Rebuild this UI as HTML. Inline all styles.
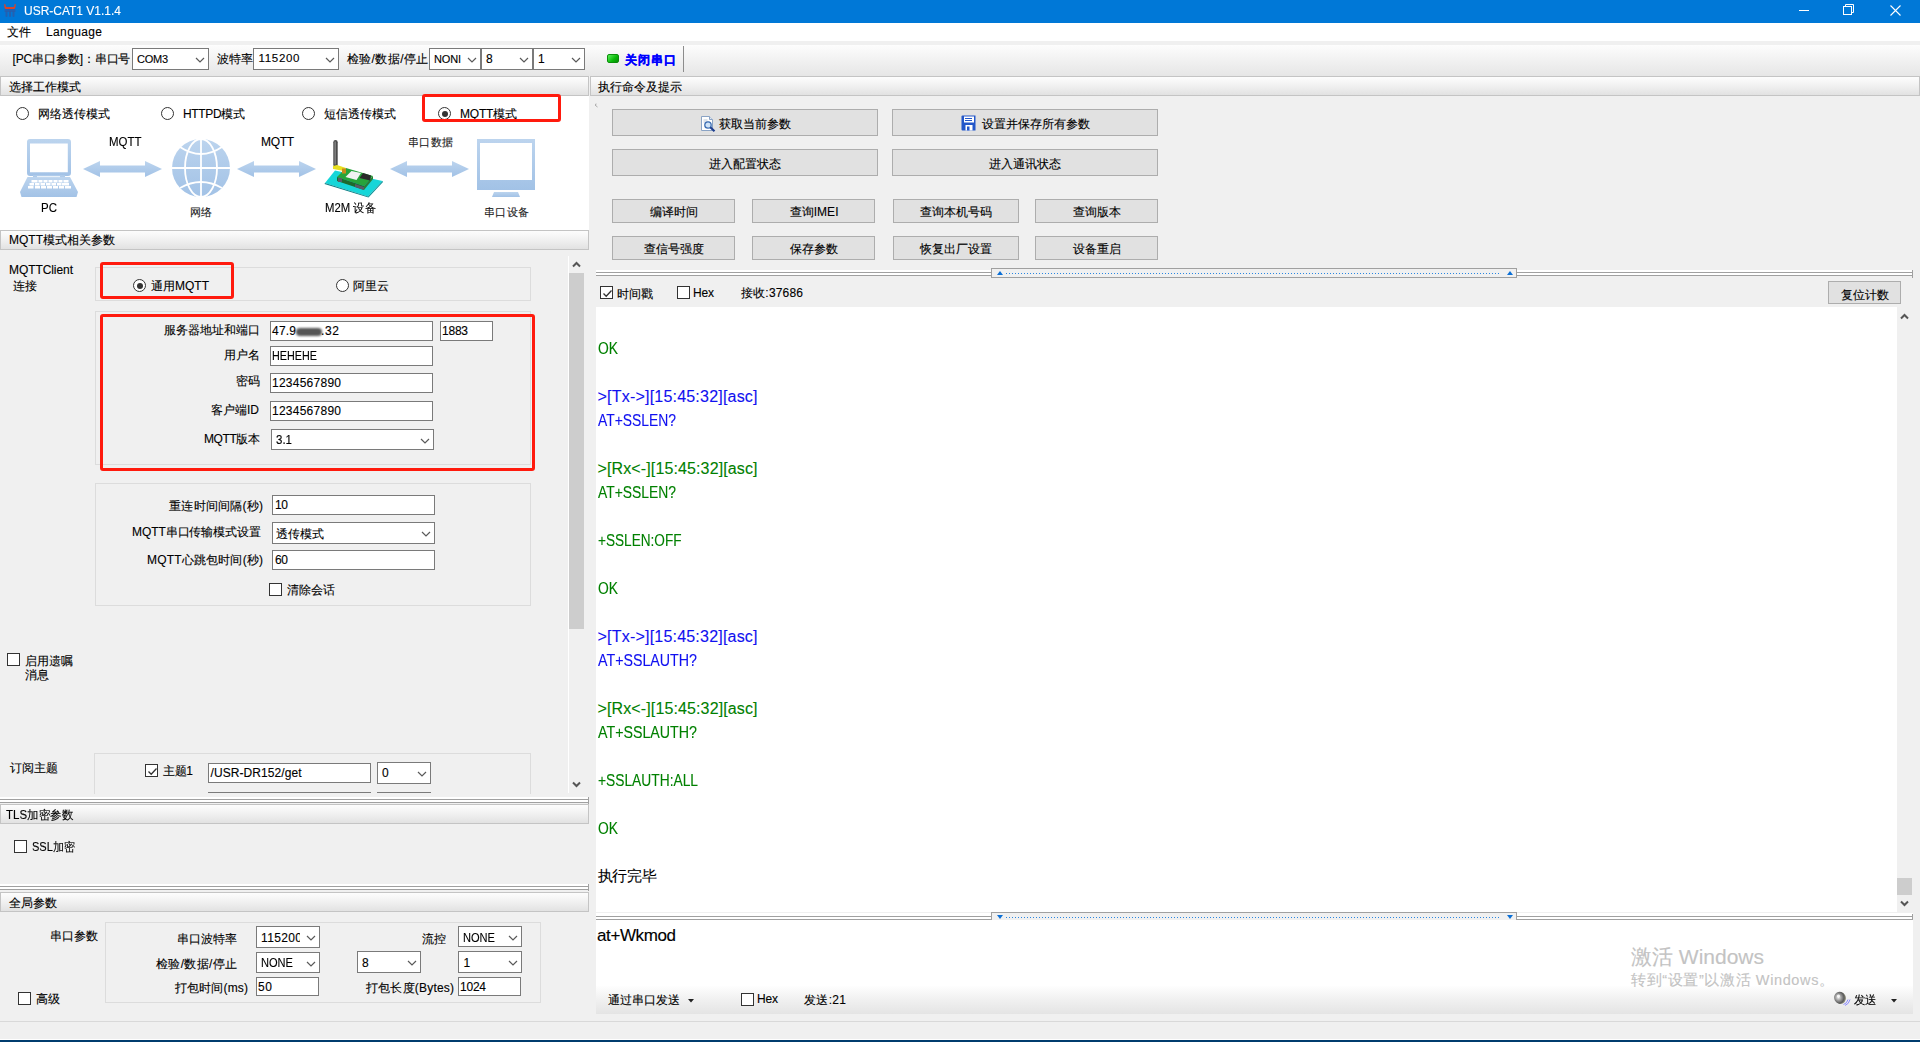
<!DOCTYPE html><html><head><meta charset="utf-8"><style>*{margin:0;padding:0;box-sizing:border-box}
html,body{width:1920px;height:1042px;overflow:hidden}
body{position:relative;background:#f0f0f0;font-family:"Liberation Sans",sans-serif;font-size:12px;color:#000}
.a{position:absolute}
.t{position:absolute;white-space:nowrap;-webkit-text-stroke:0.12px currentColor}
svg{display:block}
</style></head><body>
<div class="a" style="left:0px;top:0px;width:1920px;height:23px;background:#0078d7;"></div>
<svg class="a" style="left:4px;top:4px" width="12" height="14" viewBox="0 0 12 14"><path d="M0.2 0.3 q0.6 -0.6 1.2 0 l0.6 2.6 h8 l0.6 -2.6 q0.6 -0.6 1.2 0 l-0.4 3.2 l-1 1.6 h-9 l-1 -1.6z" fill="#d8452a"/><path d="M0.5 5 h11 v3 h-11z" fill="#2b5ba8" opacity=".75"/><rect x="1.5" y="7" width="2" height="6" rx="1" fill="#2b5ba8" opacity=".8"/><rect x="5" y="7" width="2" height="6" rx="1" fill="#2b5ba8" opacity=".8"/><rect x="8.5" y="7" width="2" height="6" rx="1" fill="#2b5ba8" opacity=".8"/></svg>
<div class="t" style="left:24px;top:4.53px;font-size:12.5px;line-height:12.5px;color:#fff;transform:scaleX(0.9585);transform-origin:0 0">USR-CAT1 V1.1.4</div>
<div class="a" style="left:1799px;top:10px;width:10px;height:1px;background:#fff;"></div>
<svg class="a" style="left:1843px;top:4px" width="12" height="12" viewBox="0 0 12 12"><rect x="0.5" y="2.5" width="8" height="8" fill="none" stroke="#fff"/><path d="M2.5 2.5 V0.5 H10.5 V8.5 H8.5" fill="none" stroke="#fff"/></svg>
<svg class="a" style="left:1890px;top:5px" width="11" height="11" viewBox="0 0 11 11"><path d="M0.5 0.5 L10.5 10.5 M10.5 0.5 L0.5 10.5" stroke="#fff" stroke-width="1.1"/></svg>
<div class="a" style="left:0px;top:23px;width:1920px;height:18px;background:#fff;"></div>
<div class="t" style="left:7px;top:25.94px;font-size:12px;line-height:12px;color:#000;">文件</div>
<div class="t" style="left:46px;top:25.94px;font-size:12px;line-height:12px;color:#000;letter-spacing:0.373px">Language</div>
<div class="a" style="left:0px;top:41px;width:1920px;height:4px;background:#f0f0f0;"></div>
<div class="a" style="left:0px;top:45px;width:1920px;height:31px;background:linear-gradient(#fdfdfd,#f1f1f1 50%,#e6e6e6);"></div>
<div class="t" style="left:12.5px;top:52.94px;font-size:12px;line-height:12px;color:#000;letter-spacing:-0.122px">[PC串口参数]：串口号</div>
<div class="a" style="left:132px;top:48px;width:77px;height:22px;background:#fff;border:1px solid #7a7a7a;"></div>
<div class="t" style="left:137px;top:53.77px;font-size:11px;line-height:11px;color:#000;letter-spacing:-0.260px">COM3</div>
<div class="a" style="left:195px;top:57.0px;width:10px;height:6px"><svg style="display:block" width="10" height="6" viewBox="0 0 10 6"><path d="M1 1 L5 5 L9 1" fill="none" stroke="#5a5a5a" stroke-width="1.2"/></svg></div>
<div class="t" style="left:216.5px;top:52.94px;font-size:12px;line-height:12px;color:#000;letter-spacing:0.000px">波特率</div>
<div class="a" style="left:253px;top:48px;width:86px;height:22px;background:#fff;border:1px solid #7a7a7a;"></div>
<div class="t" style="left:258.5px;top:53.35px;font-size:11.5px;line-height:11.5px;color:#000;letter-spacing:0.694px">115200</div>
<div class="a" style="left:325px;top:57.0px;width:10px;height:6px"><svg style="display:block" width="10" height="6" viewBox="0 0 10 6"><path d="M1 1 L5 5 L9 1" fill="none" stroke="#5a5a5a" stroke-width="1.2"/></svg></div>
<div class="t" style="left:346.5px;top:52.94px;font-size:12px;line-height:12px;color:#000;letter-spacing:0.475px">检验/数据/停止</div>
<div class="a" style="left:429px;top:48px;width:52px;height:22px;background:#fff;border:1px solid #7a7a7a;"></div>
<div class="t" style="left:434px;top:53.77px;font-size:11px;line-height:11px;color:#000;letter-spacing:-0.167px">NONI</div>
<div class="a" style="left:467px;top:57.0px;width:10px;height:6px"><svg style="display:block" width="10" height="6" viewBox="0 0 10 6"><path d="M1 1 L5 5 L9 1" fill="none" stroke="#5a5a5a" stroke-width="1.2"/></svg></div>
<div class="a" style="left:481px;top:48px;width:52px;height:22px;background:#fff;border:1px solid #7a7a7a;"></div>
<div class="t" style="left:486px;top:52.94px;font-size:12px;line-height:12px;color:#000;">8</div>
<div class="a" style="left:519px;top:57.0px;width:10px;height:6px"><svg style="display:block" width="10" height="6" viewBox="0 0 10 6"><path d="M1 1 L5 5 L9 1" fill="none" stroke="#5a5a5a" stroke-width="1.2"/></svg></div>
<div class="a" style="left:533px;top:48px;width:52px;height:22px;background:#fff;border:1px solid #7a7a7a;"></div>
<div class="t" style="left:538px;top:52.94px;font-size:12px;line-height:12px;color:#000;">1</div>
<div class="a" style="left:571px;top:57.0px;width:10px;height:6px"><svg style="display:block" width="10" height="6" viewBox="0 0 10 6"><path d="M1 1 L5 5 L9 1" fill="none" stroke="#5a5a5a" stroke-width="1.2"/></svg></div>
<div class="a" style="left:607px;top:54px;width:12px;height:9px;border-radius:2px;background:linear-gradient(135deg,#5ef05e,#08b808 60%,#0a8a0a);border:1px solid #0a8f0a;"></div>
<div class="t" style="left:624.5px;top:53.94px;font-size:12px;line-height:12px;color:#0000ff;font-weight:bold;-webkit-text-stroke:0.3px #0000ff;letter-spacing:1.000px">关闭串口</div>
<div class="a" style="left:683px;top:46px;width:1px;height:26px;background:#8c8c8c;"></div>
<div class="a" style="left:0px;top:76px;width:589px;height:20px;border:1px solid #c4c4c4;background:linear-gradient(#fdfdfd,#f3f3f3 40%,#e2e2e2);"></div>
<div class="t" style="left:9px;top:80.94px;font-size:12px;line-height:12px;color:#000;">选择工作模式</div>
<div class="a" style="left:0px;top:96px;width:589px;height:134px;background:#fff;"></div>
<div class="a" style="left:16px;top:107px;width:13px;height:13px;border:1px solid #333;border-radius:50%;background:#fff"></div>
<div class="t" style="left:37.5px;top:107.94px;font-size:12px;line-height:12px;color:#000;">网络透传模式</div>
<div class="a" style="left:161px;top:107px;width:13px;height:13px;border:1px solid #333;border-radius:50%;background:#fff"></div>
<div class="t" style="left:183px;top:107.94px;font-size:12px;line-height:12px;color:#000;letter-spacing:-0.333px">HTTPD模式</div>
<div class="a" style="left:302px;top:107px;width:13px;height:13px;border:1px solid #333;border-radius:50%;background:#fff"></div>
<div class="t" style="left:323.5px;top:107.94px;font-size:12px;line-height:12px;color:#000;">短信透传模式</div>
<div class="a" style="left:438px;top:107px;width:13px;height:13px;border:1px solid #333;border-radius:50%;background:#fff"><div class="a" style="left:2.5px;top:2.5px;width:6px;height:6px;border-radius:50%;background:#333"></div></div>
<div class="t" style="left:460px;top:107.94px;font-size:12px;line-height:12px;color:#000;letter-spacing:-0.200px">MQTT模式</div>
<div class="a" style="left:422px;top:94px;width:139px;height:28px;border:3px solid #ff1a0d;border-radius:3px;"></div>
<svg class="a" style="left:0;top:96px" width="589" height="134" viewBox="0 96 589 134">
<defs><linearGradient id="lb" x1="0" y1="0" x2="0" y2="1"><stop offset="0" stop-color="#bcd4ee"/><stop offset="1" stop-color="#a2c2e6"/></linearGradient></defs>
<g fill="url(#lb)">
<!-- laptop -->
<path d="M30 139 h38 a3 3 0 0 1 3 3 v31 a3 3 0 0 1 -3 3 h-38 a3 3 0 0 1 -3 -3 v-31 a3 3 0 0 1 3 -3z M30 143.5 v28.7 h37.8 v-28.7z" fill-rule="evenodd"/>
<path d="M33 175.5 h32 v2 h-32z"/>
<path d="M27.5 177 h42.5 l8 15 l-1.5 5 h-55 l-1.5 -5z"/>
<!-- arrows -->
<path d="M83 169 l17 -8 v4.5 h45 v-4.5 l17 8 l-17 8 v-4.5 h-45 v4.5z"/>
<path d="M237 169 l17 -8 v4.5 h45 v-4.5 l17 8 l-17 8 v-4.5 h-45 v4.5z"/>
<path d="M390 169 l17 -8 v4.5 h45 v-4.5 l17 8 l-17 8 v-4.5 h-45 v4.5z"/>
<!-- globe -->
<circle cx="201" cy="168" r="29"/>
<!-- monitor -->
<path d="M477 139 h58 v51 h-58z M480 143 v37 h52 v-37z" fill-rule="evenodd"/>
<path d="M494 192 h24 l2 5 h-28z"/>
</g>
<g fill="#fff">
<rect x="37" y="176.3" width="23" height="0.8"/>
<rect x="31.5" y="180" width="6" height="2.5"/><rect x="38.5" y="180" width="4" height="2.5"/><rect x="43.5" y="180" width="4" height="2.5"/><rect x="48.5" y="180" width="4" height="2.5"/><rect x="53.5" y="180" width="4" height="2.5"/><rect x="58.5" y="180" width="4" height="2.5"/><rect x="63.5" y="180" width="5" height="2.5"/>
<rect x="29.5" y="183" width="4.5" height="2.5"/><rect x="35" y="183" width="4.5" height="2.5"/><rect x="40.5" y="183" width="4.5" height="2.5"/><rect x="46" y="183" width="4.5" height="2.5"/><rect x="51.5" y="183" width="4.5" height="2.5"/><rect x="57" y="183" width="4.5" height="2.5"/><rect x="62" y="183" width="7" height="2.5"/>
<rect x="28" y="186" width="5.5" height="2.5"/><rect x="35" y="186" width="5" height="2.5"/><rect x="41" y="186" width="5" height="2.5"/><rect x="47" y="186" width="5" height="2.5"/><rect x="53" y="186" width="5" height="2.5"/><rect x="59" y="186" width="5" height="2.5"/><rect x="65" y="186" width="6" height="2.5"/>
</g>
<g fill="none" stroke="#fff" stroke-width="1.8">
<line x1="172" y1="168" x2="230" y2="168"/>
<line x1="201" y1="139" x2="201" y2="197"/>
<ellipse cx="201" cy="168" rx="16" ry="29"/>
<path d="M180 147 q21 14 42 0"/>
<path d="M180 188 q21 -12 42 0"/>
</g>
<!-- M2M device -->
<path d="M325 183 L335 170.5 L382.5 181 L368 196.5z" fill="#16d6d8"/>
<path d="M325 183 L368 196.5 L368.5 197.5 L324.5 184z" fill="#0a7f86"/>
<path d="M368 196.5 L382.5 181 L383 182 L368.5 197.5z" fill="#0a8f96"/>
<path d="M337 177 L346 168 L373 176 L364 186z" fill="#27a43a"/>
<path d="M337 177 L364 186 L364 190 L337 181z" fill="#1d6a2c"/>
<path d="M364 186 L373 176 L373 179 L364 190z" fill="#2a7d35"/>
<rect x="338" y="178" width="4" height="4" fill="#5a5a66"/>
<path d="M355 184 L364 187 L364 190 L355 187z" fill="#5a5a66"/>
<path d="M345.5 177 L351.5 171 L361 173 L356.5 180z" fill="#f2f2f2"/>
<path d="M359.5 178 L363 173 L371 175.5 L370 180.5z" fill="#2a2a2a"/>
<rect x="333.3" y="140" width="4.4" height="27" rx="2.2" fill="#4a4a4a"/>
<rect x="334.5" y="141.5" width="1.3" height="23" fill="#8a8a8a"/>
<path d="M333 166 L337 165 L346 168 L344 171 L333 169z" fill="#e8e020"/>
<rect x="342" y="168.5" width="4" height="5" fill="#c98a1a"/>
</svg>
<div class="t" style="left:108.5px;top:135.94px;font-size:12px;line-height:12px;color:#000;transform:scaleX(0.9559);transform-origin:0 0">MQTT</div>
<div class="t" style="left:261px;top:135.94px;font-size:12px;line-height:12px;color:#000;letter-spacing:-0.333px">MQTT</div>
<div class="t" style="left:407.5px;top:136.77px;font-size:11px;line-height:11px;color:#222;letter-spacing:0.500px">串口数据</div>
<div class="t" style="left:41px;top:201.53px;font-size:12.5px;line-height:12.5px;color:#000;transform:scaleX(0.9209);transform-origin:0 0">PC</div>
<div class="t" style="left:190px;top:206.77px;font-size:11px;line-height:11px;color:#222;letter-spacing:0.000px">网络</div>
<div class="t" style="left:325px;top:201.94px;font-size:12px;line-height:12px;color:#000;transform:scaleX(0.9444);transform-origin:0 0">M2M 设备</div>
<div class="t" style="left:483.5px;top:206.77px;font-size:11px;line-height:11px;color:#222;letter-spacing:0.500px">串口设备</div>
<div class="a" style="left:0px;top:230px;width:589px;height:20px;border:1px solid #c4c4c4;background:linear-gradient(#fdfdfd,#f3f3f3 40%,#e2e2e2);"></div>
<div class="t" style="left:9px;top:233.94px;font-size:12px;line-height:12px;color:#000;">MQTT模式相关参数</div>
<div class="t" style="left:9px;top:264.44px;font-size:12px;line-height:12px;color:#000;letter-spacing:-0.075px">MQTTClient</div>
<div class="t" style="left:12.5px;top:279.94px;font-size:12px;line-height:12px;color:#000;">连接</div>
<div class="a" style="left:95px;top:267px;width:436px;height:34px;border:1px solid #dcdcdc;"></div>
<div class="a" style="left:133px;top:279px;width:13px;height:13px;border:1px solid #333;border-radius:50%;background:#fff"><div class="a" style="left:2.5px;top:2.5px;width:6px;height:6px;border-radius:50%;background:#333"></div></div>
<div class="t" style="left:151px;top:279.94px;font-size:12px;line-height:12px;color:#000;letter-spacing:0.000px">通用MQTT</div>
<div class="a" style="left:336px;top:279px;width:13px;height:13px;border:1px solid #333;border-radius:50%;background:#fff"></div>
<div class="t" style="left:353px;top:279.94px;font-size:12px;line-height:12px;color:#000;">阿里云</div>
<div class="a" style="left:100px;top:262px;width:134px;height:37px;border:3px solid #ff1a0d;border-radius:3px;"></div>
<div class="a" style="left:95px;top:311px;width:436px;height:154px;border:1px solid #dcdcdc;"></div>
<div class="t" style="left:164px;top:323.94px;font-size:12px;line-height:12px;color:#000;">服务器地址和端口</div>
<div class="t" style="left:224px;top:348.94px;font-size:12px;line-height:12px;color:#000;">用户名</div>
<div class="t" style="left:236px;top:374.94px;font-size:12px;line-height:12px;color:#000;">密码</div>
<div class="t" style="left:211px;top:403.94px;font-size:12px;line-height:12px;color:#000;letter-spacing:0.000px">客户端ID</div>
<div class="t" style="left:204px;top:433.44px;font-size:12px;line-height:12px;color:#000;letter-spacing:-0.400px">MQTT版本</div>
<div class="a" style="left:270px;top:321px;width:163px;height:20px;background:#fff;border:1px solid #7a7a7a;"></div>
<div class="t" style="left:272px;top:324.94px;font-size:12px;line-height:12px;color:#000;letter-spacing:0.214px">47.9</div>
<div class="a" style="left:296px;top:328px;width:26px;height:8px;background:#555;border-radius:4px;filter:blur(1px);"></div>
<div class="t" style="left:321px;top:324.94px;font-size:12px;line-height:12px;color:#000;letter-spacing:0.656px">.32</div>
<div class="a" style="left:440px;top:321px;width:53px;height:20px;background:#fff;border:1px solid #7a7a7a;"></div>
<div class="t" style="left:442px;top:324.94px;font-size:12px;line-height:12px;color:#000;letter-spacing:-0.234px">1883</div>
<div class="a" style="left:270px;top:346px;width:163px;height:20px;background:#fff;border:1px solid #7a7a7a;"></div>
<div class="t" style="left:272px;top:349.94px;font-size:12px;line-height:12px;color:#000;transform:scaleX(0.8997);transform-origin:0 0">HEHEHE</div>
<div class="a" style="left:270px;top:373px;width:163px;height:20px;background:#fff;border:1px solid #7a7a7a;"></div>
<div class="t" style="left:272px;top:376.94px;font-size:12px;line-height:12px;color:#000;letter-spacing:0.250px">1234567890</div>
<div class="a" style="left:270px;top:401px;width:163px;height:20px;background:#fff;border:1px solid #7a7a7a;"></div>
<div class="t" style="left:272px;top:404.94px;font-size:12px;line-height:12px;color:#000;letter-spacing:0.250px">1234567890</div>
<div class="a" style="left:271px;top:429px;width:163px;height:21px;background:#fff;border:1px solid #7a7a7a;"></div>
<div class="t" style="left:276px;top:433.94px;font-size:12px;line-height:12px;color:#000;transform:scaleX(0.9588);transform-origin:0 0">3.1</div>
<div class="a" style="left:420px;top:437.5px;width:10px;height:6px"><svg style="display:block" width="10" height="6" viewBox="0 0 10 6"><path d="M1 1 L5 5 L9 1" fill="none" stroke="#5a5a5a" stroke-width="1.2"/></svg></div>
<div class="a" style="left:100px;top:314px;width:435px;height:157px;border:3px solid #ff1a0d;border-radius:3px;"></div>
<div class="a" style="left:95px;top:483px;width:436px;height:123px;border:1px solid #dcdcdc;"></div>
<div class="t" style="left:169px;top:499.94px;font-size:12px;line-height:12px;color:#000;letter-spacing:0.250px">重连时间间隔(秒)</div>
<div class="a" style="left:272px;top:495px;width:163px;height:20px;background:#fff;border:1px solid #7a7a7a;"></div>
<div class="t" style="left:275px;top:498.94px;font-size:12px;line-height:12px;color:#000;letter-spacing:-0.359px">10</div>
<div class="t" style="left:132px;top:526.44px;font-size:12px;line-height:12px;color:#000;letter-spacing:-0.091px">MQTT串口传输模式设置</div>
<div class="a" style="left:272px;top:522px;width:163px;height:22px;background:#fff;border:1px solid #7a7a7a;"></div>
<div class="t" style="left:276px;top:527.94px;font-size:12px;line-height:12px;color:#000;">透传模式</div>
<div class="a" style="left:421px;top:531.0px;width:10px;height:6px"><svg style="display:block" width="10" height="6" viewBox="0 0 10 6"><path d="M1 1 L5 5 L9 1" fill="none" stroke="#5a5a5a" stroke-width="1.2"/></svg></div>
<div class="t" style="left:147px;top:553.94px;font-size:12px;line-height:12px;color:#000;letter-spacing:0.183px">MQTT心跳包时间(秒)</div>
<div class="a" style="left:272px;top:550px;width:163px;height:20px;background:#fff;border:1px solid #7a7a7a;"></div>
<div class="t" style="left:275px;top:553.94px;font-size:12px;line-height:12px;color:#000;letter-spacing:-0.359px">60</div>
<div class="a" style="left:269px;top:583px;width:13px;height:13px;border:1px solid #333;background:#fff"></div>
<div class="t" style="left:287px;top:583.94px;font-size:12px;line-height:12px;color:#000;">清除会话</div>
<div class="a" style="left:7px;top:653px;width:13px;height:13px;border:1px solid #333;background:#fff"></div>
<div class="t" style="left:25px;top:654.94px;font-size:12px;line-height:12px;color:#000;">启用遗嘱</div>
<div class="t" style="left:25px;top:668.94px;font-size:12px;line-height:12px;color:#000;">消息</div>
<div class="t" style="left:10px;top:761.94px;font-size:12px;line-height:12px;color:#000;">订阅主题</div>
<div class="a" style="left:94px;top:753px;width:437px;height:41px;border:1px solid #dcdcdc;border-bottom:none;"></div>
<div class="a" style="left:145px;top:764px;width:13px;height:13px;border:1px solid #333;background:#fff"><svg class="a" style="left:1px;top:1px" width="11" height="11" viewBox="0 0 11 11"><path d="M1.5 5.5 L4.2 8.3 L9.5 2.5" fill="none" stroke="#333" stroke-width="1.3"/></svg></div>
<div class="t" style="left:163px;top:764.94px;font-size:12px;line-height:12px;color:#000;letter-spacing:-0.344px">主题1</div>
<div class="a" style="left:208px;top:763px;width:163px;height:20px;background:#fff;border:1px solid #7a7a7a;"></div>
<div class="t" style="left:210.5px;top:766.94px;font-size:12px;line-height:12px;color:#000;letter-spacing:0.073px">/USR-DR152/get</div>
<div class="a" style="left:377px;top:762px;width:54px;height:22px;background:#fff;border:1px solid #7a7a7a;"></div>
<div class="t" style="left:382px;top:766.94px;font-size:12px;line-height:12px;color:#000;">0</div>
<div class="a" style="left:417px;top:771.0px;width:10px;height:6px"><svg style="display:block" width="10" height="6" viewBox="0 0 10 6"><path d="M1 1 L5 5 L9 1" fill="none" stroke="#5a5a5a" stroke-width="1.2"/></svg></div>
<div class="a" style="left:208px;top:792px;width:163px;height:1px;background:#7a7a7a;"></div>
<div class="a" style="left:377px;top:792px;width:54px;height:1px;background:#7a7a7a;"></div>
<div class="a" style="left:568px;top:256px;width:1px;height:537px;background:#fff;"></div>
<div class="a" style="left:569px;top:273px;width:15px;height:356px;background:#cdcdcd;"></div>
<svg class="a" style="left:572px;top:261px" width="9" height="7" viewBox="0 0 9 7"><path d="M1 5.5 L4.5 2 L8 5.5" fill="none" stroke="#555" stroke-width="2"/></svg>
<svg class="a" style="left:572px;top:781px" width="9" height="7" viewBox="0 0 9 7"><path d="M1 1.5 L4.5 5 L8 1.5" fill="none" stroke="#555" stroke-width="2"/></svg>
<div class="a" style="left:0px;top:797px;width:589px;height:2px;background:#fff;"></div>
<div class="a" style="left:0px;top:799px;width:589px;height:4px;border-top:1px solid #a0a0a0;border-bottom:1px solid #a0a0a0;background:#fff;"></div>
<div class="a" style="left:588px;top:797px;width:1px;height:7px;background:#a0a0a0;"></div>
<div class="a" style="left:0px;top:804px;width:589px;height:20px;border:1px solid #c4c4c4;background:linear-gradient(#fdfdfd,#f3f3f3 40%,#e2e2e2);"></div>
<div class="t" style="left:6px;top:808.94px;font-size:12px;line-height:12px;color:#000;transform:scaleX(0.9569);transform-origin:0 0">TLS加密参数</div>
<div class="a" style="left:14px;top:840px;width:13px;height:13px;border:1px solid #333;background:#fff"></div>
<div class="t" style="left:32px;top:840.94px;font-size:12px;line-height:12px;color:#000;transform:scaleX(0.9210);transform-origin:0 0">SSL加密</div>
<div class="a" style="left:0px;top:884px;width:589px;height:2px;background:#fff;"></div>
<div class="a" style="left:0px;top:886px;width:589px;height:4px;border-top:1px solid #a0a0a0;border-bottom:1px solid #a0a0a0;background:#fff;"></div>
<div class="a" style="left:588px;top:884px;width:1px;height:7px;background:#a0a0a0;"></div>
<div class="a" style="left:0px;top:892px;width:589px;height:20px;border:1px solid #c4c4c4;background:linear-gradient(#fdfdfd,#f3f3f3 40%,#e2e2e2);"></div>
<div class="t" style="left:9px;top:896.94px;font-size:12px;line-height:12px;color:#000;">全局参数</div>
<div class="t" style="left:50px;top:929.94px;font-size:12px;line-height:12px;color:#000;">串口参数</div>
<div class="a" style="left:105px;top:922px;width:436px;height:81px;border:1px solid #dcdcdc;"></div>
<div class="t" style="left:177px;top:932.94px;font-size:12px;line-height:12px;color:#000;">串口波特率</div>
<div class="a" style="left:256px;top:926px;width:64px;height:22px;background:#fff;border:1px solid #7a7a7a;"></div>
<div class="t" style="left:261px;top:931.94px;font-size:12px;line-height:12px;color:#000;letter-spacing:0.369px">115200</div>
<div class="a" style="left:300px;top:927px;width:19px;height:20px;background:#fff;"></div>
<div class="a" style="left:306px;top:935px;width:10px;height:6px"><svg style="display:block" width="10" height="6" viewBox="0 0 10 6"><path d="M1 1 L5 5 L9 1" fill="none" stroke="#5a5a5a" stroke-width="1.2"/></svg></div>
<div class="t" style="left:156px;top:957.94px;font-size:12px;line-height:12px;color:#000;letter-spacing:0.333px">检验/数据/停止</div>
<div class="a" style="left:256px;top:952px;width:64px;height:21px;background:#fff;border:1px solid #7a7a7a;"></div>
<div class="t" style="left:261px;top:956.94px;font-size:12px;line-height:12px;color:#000;transform:scaleX(0.9229);transform-origin:0 0">NONE</div>
<div class="a" style="left:306px;top:960.5px;width:10px;height:6px"><svg style="display:block" width="10" height="6" viewBox="0 0 10 6"><path d="M1 1 L5 5 L9 1" fill="none" stroke="#5a5a5a" stroke-width="1.2"/></svg></div>
<div class="a" style="left:357px;top:951px;width:64px;height:22px;background:#fff;border:1px solid #7a7a7a;"></div>
<div class="t" style="left:362px;top:956.94px;font-size:12px;line-height:12px;color:#000;">8</div>
<div class="a" style="left:407px;top:960.0px;width:10px;height:6px"><svg style="display:block" width="10" height="6" viewBox="0 0 10 6"><path d="M1 1 L5 5 L9 1" fill="none" stroke="#5a5a5a" stroke-width="1.2"/></svg></div>
<div class="a" style="left:458px;top:951px;width:64px;height:22px;background:#fff;border:1px solid #7a7a7a;"></div>
<div class="t" style="left:463.5px;top:956.94px;font-size:12px;line-height:12px;color:#000;">1</div>
<div class="a" style="left:508px;top:960.0px;width:10px;height:6px"><svg style="display:block" width="10" height="6" viewBox="0 0 10 6"><path d="M1 1 L5 5 L9 1" fill="none" stroke="#5a5a5a" stroke-width="1.2"/></svg></div>
<div class="t" style="left:422px;top:932.94px;font-size:12px;line-height:12px;color:#000;">流控</div>
<div class="a" style="left:458px;top:926px;width:64px;height:21px;background:#fff;border:1px solid #7a7a7a;"></div>
<div class="t" style="left:463px;top:931.94px;font-size:12px;line-height:12px;color:#000;transform:scaleX(0.9229);transform-origin:0 0">NONE</div>
<div class="a" style="left:508px;top:934.5px;width:10px;height:6px"><svg style="display:block" width="10" height="6" viewBox="0 0 10 6"><path d="M1 1 L5 5 L9 1" fill="none" stroke="#5a5a5a" stroke-width="1.2"/></svg></div>
<div class="t" style="left:175px;top:981.94px;font-size:12px;line-height:12px;color:#000;letter-spacing:0.143px">打包时间(ms)</div>
<div class="a" style="left:256px;top:977px;width:63px;height:19px;background:#fff;border:1px solid #7a7a7a;"></div>
<div class="t" style="left:258px;top:980.94px;font-size:12px;line-height:12px;color:#000;letter-spacing:0.641px">50</div>
<div class="t" style="left:366px;top:981.94px;font-size:12px;line-height:12px;color:#000;letter-spacing:0.198px">打包长度(Bytes)</div>
<div class="a" style="left:458px;top:977px;width:63px;height:19px;background:#fff;border:1px solid #7a7a7a;"></div>
<div class="t" style="left:460px;top:980.94px;font-size:12px;line-height:12px;color:#000;letter-spacing:-0.234px">1024</div>
<div class="a" style="left:18px;top:992px;width:13px;height:13px;border:1px solid #333;background:#fff"></div>
<div class="t" style="left:36px;top:992.94px;font-size:12px;line-height:12px;color:#000;">高级</div>
<div class="a" style="left:0px;top:1021px;width:1920px;height:1px;background:#d9d9d9;"></div>
<div class="a" style="left:0px;top:1039px;width:1920px;height:1px;background:#fff;"></div>
<div class="a" style="left:0px;top:1040px;width:1920px;height:2px;background:#003c6e;"></div>
<div class="a" style="left:590px;top:76px;width:1330px;height:20px;border:1px solid #c4c4c4;background:linear-gradient(#fdfdfd,#f3f3f3 40%,#e2e2e2);"></div>
<div class="t" style="left:598px;top:80.94px;font-size:12px;line-height:12px;color:#000;">执行命令及提示</div>
<div class="a" style="left:612px;top:109px;width:266px;height:27px;background:#e1e1e1;border:1px solid #adadad;"></div>
<svg class="a" style="left:700px;top:116px" width="16" height="16" viewBox="0 0 16 16">
<path d="M1.5 0.5 h8 l3 3 v11 h-11z" fill="#fff" stroke="#8aa3c4"/><path d="M9.5 0.5 v3 h3" fill="#dfe8f3" stroke="#8aa3c4"/>
<path d="M3.5 4 h4 M3.5 6 h6" stroke="#b9c6d6"/>
<circle cx="8" cy="9" r="3.2" fill="#cfe3f7" stroke="#3d6eb3" stroke-width="1.3"/>
<path d="M10.3 11.3 L14.5 15.2" stroke="#1f3f8f" stroke-width="2.2"/></svg>
<div class="t" style="left:718.5px;top:118.44px;font-size:12px;line-height:12px;color:#000;">获取当前参数</div>
<div class="a" style="left:892px;top:109px;width:266px;height:27px;background:#e1e1e1;border:1px solid #adadad;"></div>
<svg class="a" style="left:961px;top:115px" width="16" height="16" viewBox="0 0 16 16">
<path d="M0.5 1.5 q0 -1 1 -1 h13 v15 h-13 q-1 0 -1 -1z" fill="#2357c9"/>
<rect x="3" y="1.5" width="10" height="6" fill="#fff"/><path d="M4 3.5 h7 M4 5.5 h7" stroke="#2357c9" stroke-width="1"/>
<rect x="4.5" y="10" width="7" height="5.5" fill="#fff"/><rect x="6" y="11.5" width="2.5" height="4" fill="#2357c9"/></svg>
<div class="t" style="left:981.5px;top:118.44px;font-size:12px;line-height:12px;color:#000;">设置并保存所有参数</div>
<div class="a" style="left:612px;top:149px;width:266px;height:27px;background:#e1e1e1;border:1px solid #adadad;"></div>
<div class="t" style="left:709px;top:158.44px;font-size:12px;line-height:12px;color:#000;">进入配置状态</div>
<div class="a" style="left:892px;top:149px;width:266px;height:27px;background:#e1e1e1;border:1px solid #adadad;"></div>
<div class="t" style="left:989px;top:158.44px;font-size:12px;line-height:12px;color:#000;">进入通讯状态</div>
<div class="a" style="left:612px;top:199px;width:123px;height:24px;background:#e1e1e1;border:1px solid #adadad;"></div>
<div class="t" style="left:649.5px;top:206.44px;font-size:12px;line-height:12px;color:#000;">编译时间</div>
<div class="a" style="left:752px;top:199px;width:123px;height:24px;background:#e1e1e1;border:1px solid #adadad;"></div>
<div class="t" style="left:789.5px;top:206.44px;font-size:12px;line-height:12px;color:#000;letter-spacing:0.066px">查询IMEI</div>
<div class="a" style="left:893px;top:199px;width:126px;height:24px;background:#e1e1e1;border:1px solid #adadad;"></div>
<div class="t" style="left:919.5px;top:206.44px;font-size:12px;line-height:12px;color:#000;">查询本机号码</div>
<div class="a" style="left:1035px;top:199px;width:123px;height:24px;background:#e1e1e1;border:1px solid #adadad;"></div>
<div class="t" style="left:1072.5px;top:206.44px;font-size:12px;line-height:12px;color:#000;">查询版本</div>
<div class="a" style="left:612px;top:236px;width:123px;height:24px;background:#e1e1e1;border:1px solid #adadad;"></div>
<div class="t" style="left:644px;top:243.44px;font-size:12px;line-height:12px;color:#000;">查信号强度</div>
<div class="a" style="left:752px;top:236px;width:123px;height:24px;background:#e1e1e1;border:1px solid #adadad;"></div>
<div class="t" style="left:790px;top:243.44px;font-size:12px;line-height:12px;color:#000;">保存参数</div>
<div class="a" style="left:893px;top:236px;width:126px;height:24px;background:#e1e1e1;border:1px solid #adadad;"></div>
<div class="t" style="left:919.5px;top:243.44px;font-size:12px;line-height:12px;color:#000;">恢复出厂设置</div>
<div class="a" style="left:1035px;top:236px;width:123px;height:24px;background:#e1e1e1;border:1px solid #adadad;"></div>
<div class="t" style="left:1073px;top:243.44px;font-size:12px;line-height:12px;color:#000;">设备重启</div>
<div class="a" style="left:596px;top:270px;width:1317px;height:3px;background:#fff;"></div>
<div class="a" style="left:596px;top:272px;width:1317px;height:4px;border-top:1px solid #a0a0a0;border-bottom:1px solid #a0a0a0;background:#fff;"></div>
<div class="a" style="left:1912px;top:270px;width:1px;height:8px;background:#a0a0a0;"></div>
<div class="a" style="left:991px;top:268px;width:526px;height:10px;background:#f0f0f0;border:1px solid #a0a0a0;"></div>
<svg class="a" style="left:997px;top:271px" width="6" height="4" viewBox="0 0 6 4"><path d="M0 4 L3 0 L6 4z" fill="#0a6fd6"/></svg>
<svg class="a" style="left:1507px;top:271px" width="6" height="4" viewBox="0 0 6 4"><path d="M0 4 L3 0 L6 4z" fill="#0a6fd6"/></svg>
<div class="a" style="left:1006px;top:273px;width:495px;height:1px;background:repeating-linear-gradient(90deg,#2a86e0 0 1px,transparent 1px 3px)"></div>
<div class="a" style="left:600px;top:286px;width:13px;height:13px;border:1px solid #333;background:#fff"><svg class="a" style="left:1px;top:1px" width="11" height="11" viewBox="0 0 11 11"><path d="M1.5 5.5 L4.2 8.3 L9.5 2.5" fill="none" stroke="#333" stroke-width="1.3"/></svg></div>
<div class="t" style="left:617px;top:287.94px;font-size:12px;line-height:12px;color:#000;">时间戳</div>
<div class="a" style="left:677px;top:286px;width:13px;height:13px;border:1px solid #333;background:#fff"></div>
<div class="t" style="left:693px;top:286.94px;font-size:12px;line-height:12px;color:#000;letter-spacing:-0.172px">Hex</div>
<div class="t" style="left:741px;top:286.94px;font-size:12px;line-height:12px;color:#000;letter-spacing:0.185px">接收:37686</div>
<div class="a" style="left:1828px;top:281px;width:73px;height:23px;background:#e1e1e1;border:1px solid #adadad;"></div>
<div class="t" style="left:1841px;top:288.94px;font-size:12px;line-height:12px;color:#000;">复位计数</div>
<div class="a" style="left:596px;top:307px;width:1301px;height:605px;background:#fff;"></div>
<div class="a" style="left:1897px;top:307px;width:15px;height:605px;background:#f0f0f0;"></div>
<div class="a" style="left:1897px;top:878px;width:15px;height:17px;background:#cdcdcd;"></div>
<svg class="a" style="left:1900px;top:313px" width="9" height="7" viewBox="0 0 9 7"><path d="M1 5.5 L4.5 2 L8 5.5" fill="none" stroke="#555" stroke-width="2"/></svg>
<svg class="a" style="left:1900px;top:900px" width="9" height="7" viewBox="0 0 9 7"><path d="M1 1.5 L4.5 5 L8 1.5" fill="none" stroke="#555" stroke-width="2"/></svg>
<div class="t" style="left:597.5px;top:341.22px;font-size:16px;line-height:16px;color:#008000;transform:scaleX(0.8649);transform-origin:0 0">OK</div>
<div class="t" style="left:597.5px;top:389.22px;font-size:16px;line-height:16px;color:#1010f0;letter-spacing:0.208px">>[Tx-&gt;][15:45:32][asc]</div>
<div class="t" style="left:597.5px;top:413.22px;font-size:16px;line-height:16px;color:#1010f0;transform:scaleX(0.8670);transform-origin:0 0">AT+SSLEN?</div>
<div class="t" style="left:597.5px;top:461.22px;font-size:16px;line-height:16px;color:#008000;letter-spacing:0.123px">>[Rx&lt;-][15:45:32][asc]</div>
<div class="t" style="left:597.5px;top:485.22px;font-size:16px;line-height:16px;color:#008000;transform:scaleX(0.8670);transform-origin:0 0">AT+SSLEN?</div>
<div class="t" style="left:597.5px;top:533.22px;font-size:16px;line-height:16px;color:#008000;transform:scaleX(0.8499);transform-origin:0 0">+SSLEN:OFF</div>
<div class="t" style="left:597.5px;top:581.22px;font-size:16px;line-height:16px;color:#008000;transform:scaleX(0.8649);transform-origin:0 0">OK</div>
<div class="t" style="left:597.5px;top:629.22px;font-size:16px;line-height:16px;color:#1010f0;letter-spacing:0.208px">>[Tx-&gt;][15:45:32][asc]</div>
<div class="t" style="left:597.5px;top:653.22px;font-size:16px;line-height:16px;color:#1010f0;transform:scaleX(0.8895);transform-origin:0 0">AT+SSLAUTH?</div>
<div class="t" style="left:597.5px;top:701.22px;font-size:16px;line-height:16px;color:#008000;letter-spacing:0.123px">>[Rx&lt;-][15:45:32][asc]</div>
<div class="t" style="left:597.5px;top:725.22px;font-size:16px;line-height:16px;color:#008000;transform:scaleX(0.8895);transform-origin:0 0">AT+SSLAUTH?</div>
<div class="t" style="left:597.5px;top:773.22px;font-size:16px;line-height:16px;color:#008000;transform:scaleX(0.8616);transform-origin:0 0">+SSLAUTH:ALL</div>
<div class="t" style="left:597.5px;top:821.22px;font-size:16px;line-height:16px;color:#008000;transform:scaleX(0.8649);transform-origin:0 0">OK</div>
<div class="t" style="left:597.5px;top:868.45px;font-size:15px;line-height:15px;color:#000;letter-spacing:-0.333px">执行完毕</div>
<div class="a" style="left:596px;top:913px;width:1317px;height:4px;background:#fff;"></div>
<div class="a" style="left:596px;top:916px;width:1317px;height:4px;border-top:1px solid #a0a0a0;border-bottom:1px solid #a0a0a0;background:#fff;"></div>
<div class="a" style="left:1912px;top:914px;width:1px;height:8px;background:#a0a0a0;"></div>
<div class="a" style="left:991px;top:912px;width:526px;height:10px;background:#f0f0f0;border:1px solid #a0a0a0;"></div>
<svg class="a" style="left:997px;top:915px" width="6" height="4" viewBox="0 0 6 4"><path d="M0 0 L6 0 L3 4z" fill="#0a6fd6"/></svg>
<svg class="a" style="left:1507px;top:915px" width="6" height="4" viewBox="0 0 6 4"><path d="M0 0 L6 0 L3 4z" fill="#0a6fd6"/></svg>
<div class="a" style="left:1006px;top:917px;width:495px;height:1px;background:repeating-linear-gradient(90deg,#2a86e0 0 1px,transparent 1px 3px)"></div>
<div class="a" style="left:596px;top:920px;width:1317px;height:66px;background:#fff;"></div>
<div class="a" style="left:596px;top:986px;width:1317px;height:28px;background:linear-gradient(#fefefe,#f0f0f0 50%,#e4e4e4);"></div>
<div class="t" style="left:597px;top:927.29px;font-size:17px;line-height:17px;color:#000;letter-spacing:-0.391px">at+Wkmod</div>
<div class="t" style="left:607.5px;top:993.94px;font-size:12px;line-height:12px;color:#000;letter-spacing:0.000px">通过串口发送</div>
<svg class="a" style="left:688px;top:999px" width="6" height="4" viewBox="0 0 6 4"><path d="M0 0 L6 0 L3 3.5z" fill="#222"/></svg>
<div class="a" style="left:741px;top:993px;width:13px;height:13px;border:1px solid #333;background:#fff"></div>
<div class="t" style="left:757px;top:992.94px;font-size:12px;line-height:12px;color:#000;letter-spacing:-0.172px">Hex</div>
<div class="t" style="left:804px;top:993.94px;font-size:12px;line-height:12px;color:#000;letter-spacing:0.328px">发送:21</div>
<div class="t" style="left:1631px;top:946.47px;font-size:21px;line-height:21px;color:#c3c3c3;letter-spacing:-0.003px">激活 Windows</div>
<div class="t" style="left:1631px;top:973.37px;font-size:14.5px;line-height:14.5px;color:#c3c3c3;letter-spacing:0.617px">转到“设置”以激活 Windows。</div>
<svg class="a" style="left:1833px;top:991px" width="18" height="15" viewBox="0 0 18 15">
<defs><radialGradient id="spk" cx="0.4" cy="0.4" r="0.6"><stop offset="0" stop-color="#f4f4f4"/><stop offset="0.45" stop-color="#9a9a9a"/><stop offset="0.8" stop-color="#5a5a5a"/><stop offset="1" stop-color="#8a8a7a"/></radialGradient></defs>
<ellipse cx="7" cy="6.8" rx="5.8" ry="6.2" transform="rotate(-30 7 6.8)" fill="url(#spk)"/>
<circle cx="5.5" cy="5" r="1.6" fill="#fff" opacity=".8"/>
<path d="M10.5 13.5 q3.5 -1 4.5 -5 M12 14.5 q4 -1.5 5 -6" fill="none" stroke="#8080ff" stroke-width=".9"/></svg>
<div class="t" style="left:1854px;top:993.94px;font-size:12px;line-height:12px;color:#000;transform:scaleX(0.9583);transform-origin:0 0">发送</div>
<svg class="a" style="left:1891px;top:999px" width="6" height="4" viewBox="0 0 6 4"><path d="M0 0 L6 0 L3 3.5z" fill="#222"/></svg>
<svg class="a" style="left:594px;top:103px" width="5" height="5" viewBox="0 0 5 5"><path d="M1 1.5 L2.5 1 M1 2 L3.5 4" stroke="#a8a8a8" stroke-width="1"/></svg>
</body></html>
